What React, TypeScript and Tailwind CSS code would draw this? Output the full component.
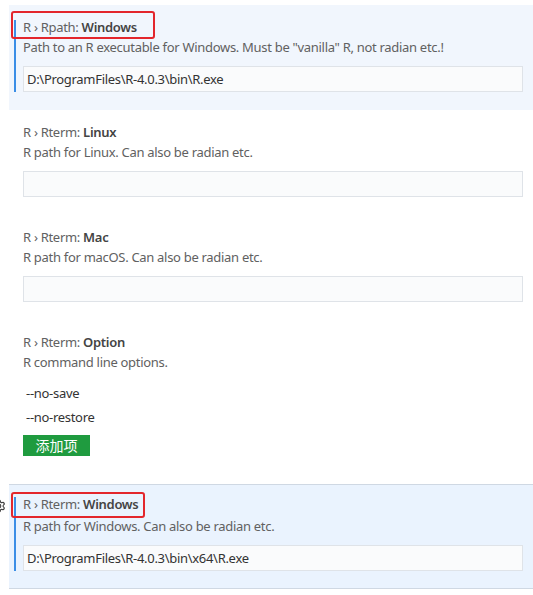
import React from 'react';
import { Settings } from 'lucide-react';

interface SettingProps {
  category: string;
  name: string;
  description: string;
  value?: string;
  highlighted?: boolean;
  boxWidth?: number;
}

const font = { fontFamily: '"Noto Sans", "Noto Sans CJK SC", sans-serif' };

// "R › Rpath:" is the regular prefix, only the key is bold
const SettingTitle: React.FC<{ category: string; name: string }> = ({ category, name }) => {
  const [prefix, key] = name.split(': ');
  return (
    <div className="text-[13px] leading-[14px] tracking-[-0.3px] text-[#616161] whitespace-nowrap">
      {category} › {prefix}: <span className="font-semibold text-[#444444]">{key}</span>
    </div>
  );
};

const SettingInput: React.FC<{ value?: string }> = ({ value }) => (
  <div className="mt-[10px] h-[26px] w-[500px] border border-[#dfe3e8] bg-[#fafbfc] pl-[3px] text-[13px] leading-[24px] tracking-[-0.3px] text-[#333333]">
    {value}
  </div>
);

const Description: React.FC<{ text: string; className?: string }> = ({ text, className = 'mt-[4px]' }) => (
  <div className={`${className} text-[13px] leading-[18px] tracking-[-0.3px] text-[#616161]`}>{text}</div>
);

const TextSetting: React.FC<SettingProps> = ({ category, name, description, value, highlighted, boxWidth }) => {
  if (highlighted) {
    return (
      <div className="relative ml-[9px] bg-[#f1f6fd] pl-[5px] pt-[15px] pb-[18px]">
        <div className="border-l-2 border-[#3b8ee6] pl-[7px]">
          <SettingTitle category={category} name={name} />
          <Description text={description} />
          <SettingInput value={value} />
        </div>
        <div
          className="absolute left-[2px] top-[6px] h-[28px] rounded-[3px] border-2 border-[#e3262c]"
          style={{ width: boxWidth }}
        />
      </div>
    );
  }
  return (
    <div className="ml-[9px] pl-[14px] pt-[15px] pb-[18px]">
      <SettingTitle category={category} name={name} />
      <Description text={description} />
      <SettingInput value={value} />
    </div>
  );
};

const OptionSetting: React.FC = () => (
  <div className="ml-[9px] pl-[14px] pt-[15px] pb-[27px]">
    <SettingTitle category="R" name="Rterm: Option" />
    <Description text="R command line options." />
    <div className="mt-[10px] pl-[3px] text-[13px] leading-[24px] tracking-[-0.3px] text-[#333333]">
      <div>--no-save</div>
      <div>--no-restore</div>
    </div>
    <button className="mt-[6px] h-[21px] w-[67px] bg-[#1f9b3f] text-[14px] leading-[21px] text-white">
      添加项
    </button>
  </div>
);

export default function App() {
  return (
    <div className="relative h-[595px] w-[533px] overflow-hidden bg-white pt-[5px]" style={font}>
      <TextSetting
        category="R"
        name="Rpath: Windows"
        description={'Path to an R executable for Windows. Must be "vanilla" R, not radian etc.!'}
        value="D:\ProgramFiles\R-4.0.3\bin\R.exe"
        highlighted
        boxWidth={144}
      />
      <TextSetting category="R" name="Rterm: Linux" description="R path for Linux. Can also be radian etc." />
      <TextSetting category="R" name="Rterm: Mac" description="R path for macOS. Can also be radian etc." />
      <OptionSetting />
      <div className="relative ml-[9px] border-y border-[#cfd8e3] bg-[#eaf3fe] pl-[5px] pt-[12px] pb-[17px]">
        <Settings className="absolute left-[-17px] top-[14px] h-[14px] w-[14px] text-[#424242]" />
        <div className="border-l-2 border-[#3b8ee6] pl-[7px]">
          <SettingTitle category="R" name="Rterm: Windows" />
          <Description text="R path for Windows. Can also be radian etc." className="mt-[6px]" />
          <SettingInput value="D:\ProgramFiles\R-4.0.3\bin\x64\R.exe" />
        </div>
        <div className="absolute left-[2px] top-[7px] h-[26px] w-[134px] rounded-[3px] border-2 border-[#e3262c]" />
      </div>
    </div>
  );
}
